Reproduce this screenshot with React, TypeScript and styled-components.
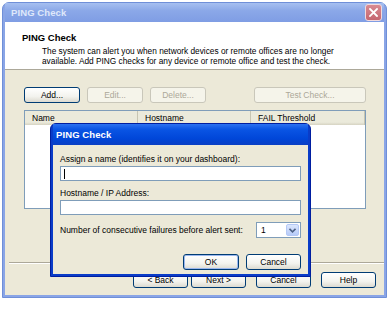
import React from "react";
import styled, { createGlobalStyle } from "styled-components";

const GlobalStyle = createGlobalStyle`
  html, body {
    margin: 0;
    padding: 0;
    background: #ffffff;
    font-family: "Liberation Sans", Arial, sans-serif;
    font-size: 8.5px;
    color: #000;
  }
`;

const Stage = styled.div`
  position: relative;
  width: 391px;
  height: 309px;
  padding: 2px 0 0 2px;
  box-sizing: border-box;
`;

const Window = styled.div`
  width: 385px;
  height: 296px;
  box-sizing: border-box;
  display: flex;
  flex-direction: column;
  background: #8aa5e6;
  border: 1px solid #6f8fd8;
  border-radius: 7px 7px 0 0;
  padding: 0 2px 2px 2px;
`;

const TitleBar = styled.div<{ $active?: boolean }>`
  height: ${(p) => (p.$active ? "21px" : "19px")};
  flex: none;
  display: flex;
  align-items: center;
  justify-content: space-between;
  padding: 0 2px 0 ${(p) => (p.$active ? "3px" : "6px")};
  background: ${(p) =>
    p.$active
      ? "linear-gradient(180deg, #2b71f0 0%, #0a55e4 25%, #0046d8 70%, #0a3fc4 100%)"
      : "linear-gradient(180deg, #a6bff0 0%, #8ba8e8 40%, #7f9de4 100%)"};
  color: ${(p) => (p.$active ? "#ffffff" : "#dfe8fa")};
  font-weight: bold;
  font-size: 9.5px;
  letter-spacing: 0.1px;
`;

const CloseButton = styled.div`
  width: 15px;
  height: 15px;
  border-radius: 3px;
  border: 1px solid #f2dadd;
  background: linear-gradient(180deg, #d88a92 0%, #c56670 100%);
  display: flex;
  align-items: center;
  justify-content: center;
`;

const Client = styled.div`
  flex: 1;
  display: flex;
  flex-direction: column;
  background: #ece9d8;
`;

const Header = styled.div`
  background: #ffffff;
  height: 48px;
  box-sizing: border-box;
  padding: 10px 0 0 17px;
  border-bottom: 1px solid #aca899;
  flex: none;
`;

const HeaderTitle = styled.div`
  font-weight: bold;
  font-size: 9.5px;
  margin-bottom: 3px;
`;

const HeaderText = styled.div`
  padding-left: 20px;
  line-height: 10px;
  font-size: 8.3px;
`;

const Toolbar = styled.div`
  display: flex;
  gap: 7px;
  padding: 17px 0 0 19px;
  width: 361px;
  box-sizing: border-box;
`;

const Button = styled.button<{ $w?: number; $disabled?: boolean; $default?: boolean }>`
  width: ${(p) => p.$w ?? 56}px;
  height: 16px;
  padding: 0;
  border-radius: 3px;
  font-family: inherit;
  font-size: 8.5px;
  color: ${(p) => (p.$disabled ? "#aca899" : "#000")};
  border: 1px solid ${(p) => (p.$disabled ? "#c9c7ba" : "#003c74")};
  background: ${(p) =>
    p.$disabled ? "#f5f4ea" : "linear-gradient(180deg, #ffffff 0%, #f3f3ee 60%, #dcdad0 100%)"};
  box-shadow: ${(p) => (p.$default ? "inset 0 0 0 1px #9bb7ee" : "none")};
  flex: none;
`;

const Spacer = styled.div`
  flex: 1;
`;

const List = styled.div`
  margin: 7px 0 0 19px;
  width: 342px;
  height: 99px;
  box-sizing: border-box;
  background: #ffffff;
  border: 1px solid #7f9db9;
`;

const ListHeader = styled.div`
  display: flex;
  height: 14px;
  background: linear-gradient(180deg, #ebeadb 0%, #ebeadb 80%, #d6d3c2 100%);
`;

const Column = styled.div<{ $w: number }>`
  width: ${(p) => p.$w}px;
  box-sizing: border-box;
  padding-left: 7px;
  display: flex;
  align-items: center;
  border-right: 1px solid #c7c5b2;
  font-size: 8.5px;
`;

const Separator = styled.div`
  margin: auto 0 0 4px;
  width: 375px;
  border-top: 1px solid #aca899;
  border-bottom: 1px solid #ffffff;
`;

const Footer = styled.div`
  display: flex;
  padding: 8px 8px 7px 0;
  justify-content: flex-end;
`;

const FooterGroup = styled.div<{ $gap: number }>`
  display: flex;
  gap: ${(p) => p.$gap}px;
  margin-left: 10px;
`;

const Dialog = styled.div`
  position: absolute;
  left: 50px;
  top: 123px;
  width: 261px;
  height: 154px;
  box-sizing: border-box;
  display: flex;
  flex-direction: column;
  background: #0a3cc8;
  border: 1px solid #001ea0;
  border-radius: 6px 6px 0 0;
  padding: 0 2px 2px 2px;
`;

const DialogBody = styled.div`
  flex: 1;
  background: #ece9d8;
  padding: 9px 7px 0 7px;
  display: flex;
  flex-direction: column;
`;

const Label = styled.div`
  font-size: 8.5px;
  line-height: 11px;
`;

const Input = styled.div`
  height: 15px;
  box-sizing: border-box;
  border: 1px solid #7f9db9;
  background: #ffffff;
  margin: 1px 0 7px 0;
  display: flex;
  align-items: center;
  padding-left: 3px;
`;

const Caret = styled.div`
  width: 1px;
  height: 10px;
  background: #000;
`;

const FieldRow = styled.div`
  display: flex;
  align-items: center;
  justify-content: space-between;
`;

const Select = styled.div`
  width: 45px;
  height: 16px;
  box-sizing: border-box;
  border: 1px solid #7f9db9;
  background: #fff;
  display: flex;
  align-items: center;
  justify-content: space-between;
  padding: 1px 1px 1px 4px;
  font-size: 8.5px;
`;

const SelectArrow = styled.div`
  width: 13px;
  height: 12px;
  border-radius: 2px;
  background: linear-gradient(180deg, #dbe6fd 0%, #b7cbf8 100%);
  border: 1px solid #b4c8f6;
  box-sizing: border-box;
  display: flex;
  align-items: center;
  justify-content: center;
`;

const DialogButtons = styled.div`
  display: flex;
  justify-content: flex-end;
  gap: 7px;
  margin-top: 16px;
`;

export default function App() {
  return (
    <>
      <GlobalStyle />
      <Stage>
        <Window>
          <TitleBar>
            <span>PING Check</span>
            <CloseButton>
              <svg width="9" height="9" viewBox="0 0 9 9">
                <path d="M1 1 L8 8 M8 1 L1 8" stroke="#fff" strokeWidth="1.8" strokeLinecap="square" />
              </svg>
            </CloseButton>
          </TitleBar>
          <Client>
            <Header>
              <HeaderTitle>PING Check</HeaderTitle>
              <HeaderText>
                The system can alert you when network devices or remote offices are no longer
                <br />
                available. Add PING checks for any device or remote office and test the check.
              </HeaderText>
            </Header>
            <Toolbar>
              <Button>Add...</Button>
              <Button $disabled>Edit...</Button>
              <Button $disabled>Delete...</Button>
              <Spacer />
              <Button $disabled $w={112}>Test Check...</Button>
            </Toolbar>
            <List>
              <ListHeader>
                <Column $w={113}>Name</Column>
                <Column $w={113}>Hostname</Column>
                <Column $w={114}>FAIL Threshold</Column>
              </ListHeader>
            </List>
            <Separator />
            <Footer>
              <FooterGroup $gap={3}>
                <Button $w={55}>&lt; Back</Button>
                <Button $w={55}>Next &gt;</Button>
              </FooterGroup>
              <FooterGroup $gap={10}>
                <Button $w={55}>Cancel</Button>
                <Button $w={55}>Help</Button>
              </FooterGroup>
            </Footer>
          </Client>
        </Window>

        <Dialog>
          <TitleBar $active>
            <span>PING Check</span>
          </TitleBar>
          <DialogBody>
            <Label>Assign a name (identifies it on your dashboard):</Label>
            <Input>
              <Caret />
            </Input>
            <Label>Hostname / IP Address:</Label>
            <Input />
            <FieldRow>
              <Label>Number of consecutive failures before alert sent:</Label>
              <Select>
                <span>1</span>
                <SelectArrow>
                  <svg width="7" height="5" viewBox="0 0 7 5">
                    <path d="M0.5 0.8 L3.5 3.8 L6.5 0.8" stroke="#4d6185" strokeWidth="1.6" fill="none" />
                  </svg>
                </SelectArrow>
              </Select>
            </FieldRow>
            <DialogButtons>
              <Button $default>OK</Button>
              <Button $w={55}>Cancel</Button>
            </DialogButtons>
          </DialogBody>
        </Dialog>
      </Stage>
    </>
  );
}
